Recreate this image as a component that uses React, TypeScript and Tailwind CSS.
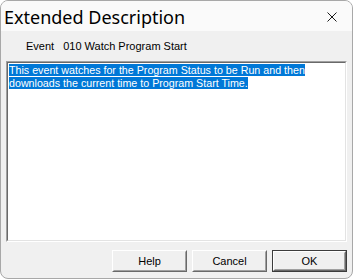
import React from "react";

const sans = { fontFamily: '"Liberation Sans", Arial, sans-serif' };

function WinButton({ label, primary = false }: { label: string; primary?: boolean }) {
  return (
    <div
      className={`w-[75px] h-[22px] ${primary ? "border border-[#3c3c3c]" : ""} bg-[#f0f0f0]`}
    >
      <div className="w-full h-full border border-t-white border-l-white border-b-[#696969] border-r-[#696969]">
        <div className="w-full h-full flex items-center justify-center border border-t-[#f0f0f0] border-l-[#f0f0f0] border-b-[#a0a0a0] border-r-[#a0a0a0] text-[11px] text-black">
          {label}
        </div>
      </div>
    </div>
  );
}

export default function App() {
  return (
    <div className="w-[353px] h-[279px] bg-white">
      <div
        className="w-full h-full rounded-[8px] border border-[#a8a8a8] bg-[#f0f0f0] overflow-hidden flex flex-col"
        style={sans}
      >
        {/* Title bar */}
        <div className="h-[30px] bg-[#fafafa] flex items-center justify-between pl-[3px] pr-[15px]">
          <span
            className="text-[18px] text-black leading-none pt-[1px]"
            style={{ fontFamily: '"Noto Sans", "Open Sans", sans-serif' }}
          >
            Extended Description
          </span>
          <svg width="10" height="10" viewBox="0 0 10 10" className="mt-[1px]">
            <path d="M0.5 0.5 L9.5 9.5 M9.5 0.5 L0.5 9.5" stroke="#1a1a1a" strokeWidth="1" />
          </svg>
        </div>

        {/* Event line */}
        <div className="h-[30px] flex items-center pl-[25px] text-[11px] text-black">
          <span>Event</span>
          <span className="ml-[9px]">010 Watch Program Start</span>
        </div>

        {/* Text area */}
        <div className="mx-[5px] h-[181px] border border-t-[#a0a0a0] border-l-[#a0a0a0] border-b-white border-r-white">
          <div className="w-full h-full border border-t-[#696969] border-l-[#696969] border-b-[#e3e3e3] border-r-[#e3e3e3] bg-white pl-[1px] pt-[1px] text-[10.7px] leading-[13px]">
            <div>
              <span className="bg-[#0078d7] text-white">
                This event watches for the Program Status to be Run and then{" "}
              </span>
            </div>
            <div>
              <span className="bg-[#0078d7] text-white">
                downloads the current time to Program Start Time.
              </span>
            </div>
          </div>
        </div>

        {/* Buttons */}
        <div className="flex justify-end gap-[5px] pr-[5px] mt-[8px]">
          <WinButton label="Help" />
          <WinButton label="Cancel" />
          <WinButton label="OK" primary />
        </div>
      </div>
    </div>
  );
}
